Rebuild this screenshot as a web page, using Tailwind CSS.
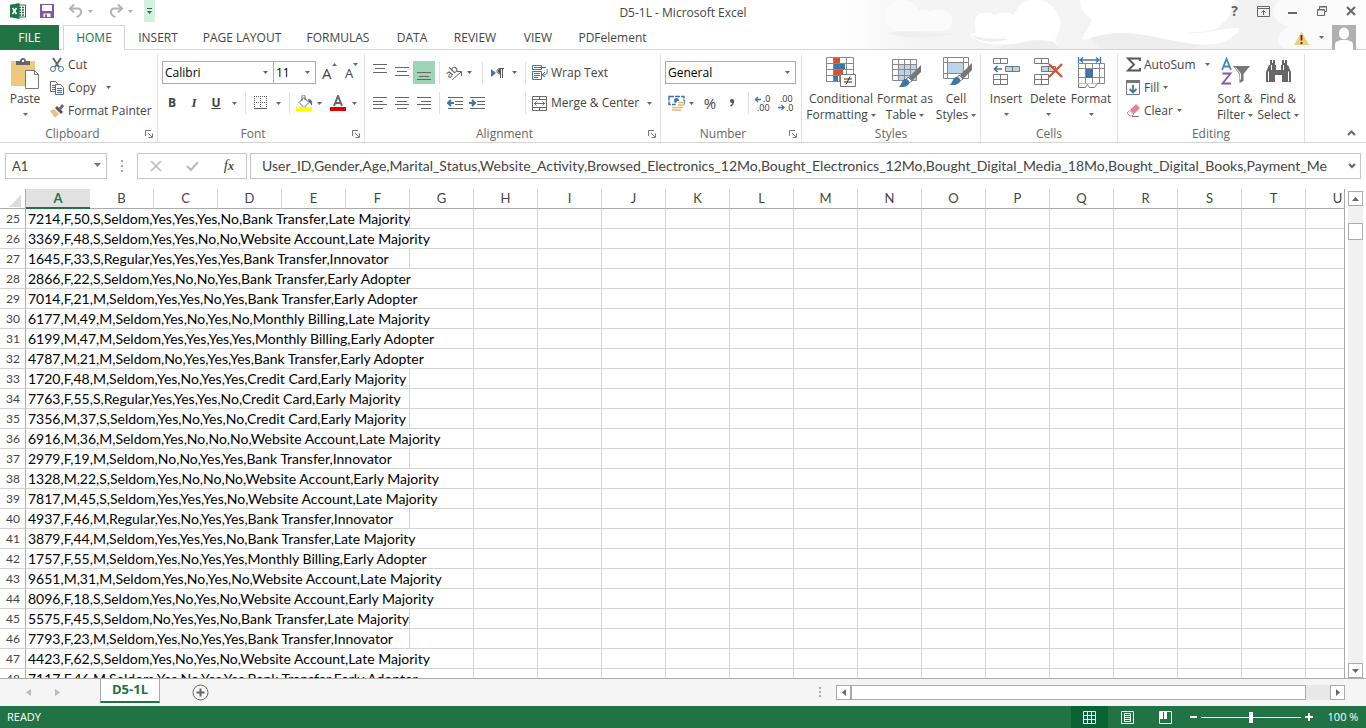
<!DOCTYPE html>
<html lang="en">
<head>
  <meta charset="UTF-8" />
  <meta name="viewport" content="width=device-width, initial-scale=1.0"/>
  <title>D5-1L - Microsoft Excel</title>
  <script src="https://cdn.jsdelivr.net/npm/@tailwindcss/browser@4"></script>
</head>
<body class="h-screen flex flex-col overflow-hidden bg-white text-[#444] text-xs font-['Open_Sans','Noto_Sans',sans-serif]">

  <!-- Shared glyphs -->
  <svg class="hidden" aria-hidden="true">
    <symbol id="caret" viewBox="0 0 5 3"><path d="M0 0h5L2.500 3z" fill="#666"/></symbol>
    <symbol id="launcher" viewBox="0 0 8 8"><path d="M.5 6V.5H6M3 3l4 4M7.500 3.500v4h-4" fill="none" stroke="#777"/></symbol>
  </svg>

  <header class="relative shrink-0 h-[50px] border-b border-[#d4d4d4]">
    <!-- Cloud background -->
    <svg class="absolute right-0 top-0 w-[526px] h-[49px]" viewBox="0 0 526 49" aria-hidden="true">
      <defs>
        <linearGradient id="sky"><stop offset="0" stop-color="#fff"/><stop offset=".14" stop-color="#f4f4f4"/><stop offset=".85" stop-color="#f2f2f2"/><stop offset="1" stop-color="#f8f8f8"/></linearGradient>
      </defs>
      <path d="M0 0h526v49H0z" fill="url(#sky)"/>
      <path d="M46 21C43 8 53-3 65 0c8 1 12 6 14 11 5-3 9-1 11 1 7-5 14-2 20 2 5 5 2 16-7 17H60c-8 0-12-4-14-10z" fill="#fbfbfb"/>
      <path d="M48 33c20-5 45 2 66 0-10 6-55 6-66 0z" fill="#efefef"/>
      <path d="M135 25c-2-12 10-15 20-10 6-4 14-3 19 0C178 2 190-3 204 1c18 8 20 28 11 38l3 8c-14-11-28-6-40-4-12 3-34 2-43-4-5-3-7-5-2-5 4-1 2-4 2-9z" fill="#fff"/>
      <path d="M132 35c12 5 24 3 36 4-12 5-30 3-36-4zM162 45c18 0 34-8 52-3l6 7h-60z" fill="#eee"/>
      <path d="M240 0h155c-4 11-6 19-12 23-10 12-26 7-35 10 20 2 42-8 52-4-12 16-24 15-48 16-30 0-60-16-110-5 2-7 7-14 10-20-8-7-13-12-12-20z" fill="#fff"/>
      <path d="M250 38c40-14 76 5 116 7l-18 4h-86z" fill="#eee"/>
      <path d="M440 0h86v49h-80c-14-5-8-19 4-22-18-5-22-18-10-27z" fill="#fff" opacity=".6"/>
    </svg>

    <div class="relative h-[25px] flex items-start justify-between">
      <div class="flex items-center h-[22px] pl-2.5">
        <svg class="w-4 h-4" viewBox="0 0 16 16" aria-label="Excel"><path d="M8 2h7.500v12H8z" fill="#fff" stroke="#217346"/><path d="M9 4.500h2M12 4.500h2M9 7h2M12 7h2M9 9.500h2M12 9.500h2M9 12h2M12 12h2" stroke="#217346" stroke-width="1.300"/><path d="M0 1.700 9.500 0v16L0 14.300z" fill="#217346"/><path d="M2.500 5l4 6M6.500 5l-4 6" stroke="#fff" stroke-width="1.600"/></svg>
        <button class="ml-3.5 w-3.5 h-3.5" aria-label="Save"><svg viewBox="0 0 14 14"><path d="M0 0h14v14H0z" fill="#7f57a5"/><path d="M2 1h10v6H2zM3.500 9.500h7V13h-7z" fill="#fff"/><path d="M5 10.500h2V13H5z" fill="#7f57a5"/></svg></button>
        <button class="ml-3.5 w-4 h-4" aria-label="Undo"><svg viewBox="0 0 16 16"><path d="M2 5.500h7.500c5 0 5 6.500-1 8.500M6 1.500l-4 4 4 4" fill="none" stroke="#b3b3b3" stroke-width="2"/></svg></button>
        <button class="w-3 h-4 flex items-center justify-center opacity-50" aria-label="Undo list"><svg class="w-[5px] h-[3px]"><use href="#caret"/></svg></button>
        <button class="ml-3 w-4 h-4" aria-label="Redo"><svg viewBox="0 0 16 16"><path d="M14 5.500H6.500c-5 0-5 6.500 1 8.500M10 1.500l4 4-4 4" fill="none" stroke="#b3b3b3" stroke-width="2"/></svg></button>
        <button class="w-3 h-4 flex items-center justify-center opacity-50" aria-label="Redo list"><svg class="w-[5px] h-[3px]"><use href="#caret"/></svg></button>
        <button class="ml-2 w-[11px] h-[22px] bg-[#d3f0e0] flex items-center justify-center" aria-label="Customize"><svg class="w-[5px] h-1.5" viewBox="0 0 5 6"><path d="M0 .5h5" stroke="#217346"/><path d="M0 3h5L2.500 6z" fill="#217346"/></svg></button>
      </div>
      <div class="flex h-[22px] items-center">
        <button class="w-[29px] font-bold text-sm text-[#666]" aria-label="Help">?</button>
        <button class="w-[29px] flex justify-center" aria-label="Ribbon display options"><svg class="w-[13px] h-[11px]" viewBox="0 0 13 11" fill="none" stroke="#666"><path d="M.5.5h12v10H.5zM.5 2.500h12M6.500 9V4.500M4.500 6.500l2-2 2 2"/></svg></button>
        <button class="w-[29px] flex justify-center" aria-label="Minimize"><svg class="w-[9px] h-[11px]" viewBox="0 0 9 11"><path d="M0 6h9v2H0z" fill="#666"/></svg></button>
        <button class="w-[29px] flex justify-center" aria-label="Restore"><svg class="w-[10px] h-[10px]" viewBox="0 0 10 10" fill="none" stroke="#666"><path d="M2.500 3V.5h7v5H8M2 1h8M.5 3.500h7v6h-7zM0 4h8"/></svg></button>
        <button class="w-[30px] flex justify-center" aria-label="Close"><svg class="w-[10px] h-[10px]" viewBox="0 0 10 10"><path d="M1 1l8 8M9 1L1 9" stroke="#666" stroke-width="2"/></svg></button>
      </div>
    </div>
    <h1 class="absolute inset-x-0 top-1 text-center leading-[18px] pointer-events-none">D5-1L - Microsoft Excel</h1>

    <nav class="relative h-[25px] flex">
      <button class="w-[59px] h-[25px] bg-[#217346] text-white">FILE</button>
      <button class="ml-1 w-[62px] h-[25px] bg-white border border-b-0 border-[#d4d4d4] text-[#217346]">HOME</button>
      <button class="w-[66px]">INSERT</button>
      <button class="w-[102px]">PAGE LAYOUT</button>
      <button class="w-[90px]">FORMULAS</button>
      <button class="w-[58px]">DATA</button>
      <button class="w-[68px]">REVIEW</button>
      <button class="w-[58px]">VIEW</button>
      <button class="w-[91px]">PDFelement</button>
      <div class="ml-auto mr-2.5 flex items-center">
        <svg class="w-[15px] h-3.5" viewBox="0 0 15 14" aria-label="Account warning"><path d="M7.500.5 15 14H0z" fill="#f0cc80"/><path d="M7.500 4v5.500M7.500 11v2" stroke="#5b2b1a" stroke-width="1.800"/></svg>
        <svg class="ml-2.5 w-[5px] h-[3px]"><use href="#caret"/></svg>
        <svg class="ml-2 w-6 h-[25px]" viewBox="0 0 24 25" aria-label="Account"><path d="M0 0h24v25H0z" fill="#b0b0b0"/><ellipse cx="12" cy="8.500" rx="5" ry="6" fill="#fff"/><path d="M3 25v-5c0-3 2-4 6-5h6c4 1 6 2 6 5v5z" fill="#fff"/></svg>
      </div>
    </nav>
  </header>

  <!-- Ribbon -->
  <section class="shrink-0 h-[93px] flex border-b border-[#d4d4d4] text-[#444] leading-4 whitespace-nowrap">

    <div class="w-[158px] mt-1 border-r border-[#e1e1e1] flex flex-col justify-between">
      <div class="flex pl-2">
        <button class="w-[34px] pt-1 flex flex-col items-center">
          <svg class="w-7 h-[31px]" viewBox="0 0 28 31"><path d="M0 3h24v25H0z" fill="#edc87e"/><path d="M5 3h4c0-4 6-4 6 0h4v4H5z" fill="#666"/><path d="M11 2h2v2h-2z" fill="#fff"/><path d="M14.500 12.500h9l4 4v14h-13z" fill="#fff" stroke="#777"/><path d="M23.500 12.500v4h4" fill="none" stroke="#777"/></svg>
          <span class="mt-0.5">Paste</span>
          <svg class="mt-1.5 w-[5px] h-[3px]"><use href="#caret"/></svg>
        </button>
        <div class="ml-2 -mt-px flex flex-col">
          <button class="h-[23px] flex items-center gap-1"><svg class="w-3.5 h-4" viewBox="0 0 14 16" fill="none"><path d="M3 1l6 9M11 1L5 10" stroke="#666" stroke-width="2"/><circle cx="3" cy="12" r="2.500" stroke="#3f76a8"/><circle cx="11" cy="12" r="2.500" stroke="#3f76a8"/></svg>Cut</button>
          <button class="h-[23px] flex items-center gap-1"><svg class="w-3.5 h-3.5" viewBox="0 0 14 14" fill="#fff" stroke="#666"><path d="M.5.5h5l2 2v8h-7z"/><path d="M2 4.500h3M2 6.500h3M2 8.500h3" stroke="#3f76a8"/><path d="M5.500 3.500h5l3 3v7h-8z"/><path d="M7 7.500h5M7 9.500h5M7 11.500h5" stroke="#3f76a8"/></svg>Copy<svg class="ml-1.5 w-[5px] h-[3px]"><use href="#caret"/></svg></button>
          <button class="h-[23px] flex items-center gap-1"><svg class="w-3.5 h-3.5" viewBox="0 0 14 14"><path d="M0 7l4-2 5 5-4 4z" fill="#edc087"/><path d="M5 4l2-2 6 6-2 2z" fill="#555"/><path d="M9 4l3-4 2 2-3 4z" fill="#666"/></svg>Format Painter</button>
        </div>
      </div>
      <div class="flex items-center pl-1 pr-1"><span class="flex-1 text-center text-[#666] pr-1">Clipboard</span><button aria-label="Clipboard options"><svg class="w-2 h-2"><use href="#launcher"/></svg></button></div>
    </div>

    <div class="w-[207px] mt-1 border-r border-[#e1e1e1] flex flex-col justify-between">
      <div class="pl-1 pt-[7px]">
        <div class="flex items-center">
          <div class="relative"><select aria-label="Font" class="appearance-none block w-[112px] h-[23px] border border-[#ababab] bg-white pl-0.5 text-black"><option>Calibri</option></select><svg class="absolute right-1.5 top-2.5 w-[5px] h-[3px] pointer-events-none"><use href="#caret"/></svg></div>
          <div class="relative -ml-px"><select aria-label="Font size" class="appearance-none block w-[43px] h-[23px] border border-[#ababab] bg-white pl-0.5 text-black"><option>11</option></select><svg class="absolute right-1.5 top-2.5 w-[5px] h-[3px] pointer-events-none"><use href="#caret"/></svg></div>
          <button class="ml-1.5 w-[15px] h-5 flex text-[15px] leading-5" aria-label="Grow font">A<svg class="w-[5px] h-[3px] shrink-0" viewBox="0 0 5 3"><path d="M0 3h5L2.500 0z" fill="#3f76a8"/></svg></button>
          <button class="ml-2 w-[15px] h-5 flex text-[13px] leading-5" aria-label="Shrink font">A<svg class="w-[5px] h-[3px] shrink-0" viewBox="0 0 5 3"><path d="M0 0h5L2.500 3z" fill="#3f76a8"/></svg></button>
        </div>
        <div class="mt-2 h-[22px] flex items-center">
          <button class="w-5 font-bold">B</button>
          <button class="ml-0.5 w-5 font-bold italic text-[13px] font-['Liberation_Serif',serif]">I</button>
          <button class="ml-0.5 w-5 font-bold underline">U</button>
          <svg class="ml-1.5 w-[5px] h-[3px]"><use href="#caret"/></svg>
          <span class="ml-2 h-[22px] border-l border-[#e1e1e1]"></span>
          <button class="ml-2 w-3.5 h-3.5" aria-label="Borders"><svg viewBox="0 0 14 14" fill="none" stroke="#555"><path d="M.5 0v13M6.500 0v13M12.500 0v13M0 .5h13M0 6.500h13" stroke-dasharray="1 1"/><path d="M0 12.500h13"/></svg></button>
          <svg class="ml-2 w-[5px] h-[3px]"><use href="#caret"/></svg>
          <span class="ml-2 h-[22px] border-l border-[#e1e1e1]"></span>
          <button class="ml-1.5 w-[17px] h-4" aria-label="Fill color"><svg viewBox="0 0 17 16"><path d="M3 7.500l5-5 5 5-5 5z" fill="#fff" stroke="#666"/><path d="M6 6V1.500c0-2 3-2 3 0V5" fill="none" stroke="#666"/><path d="M12 4c4 0 5 3 3.500 7-1-3-2-4-3-4z" fill="#3f76a8"/><path d="M0 12h16v4H0z" fill="#ff0"/></svg></button>
          <svg class="ml-1 w-[5px] h-[3px]"><use href="#caret"/></svg>
          <button class="ml-2 w-4 h-4" aria-label="Font color"><svg viewBox="0 0 16 16"><path d="M4 11L8 1l4 10M5.500 8h5" fill="none" stroke="#666" stroke-width="2"/><path d="M0 12h16v4H0z" fill="#e00000"/></svg></button>
          <svg class="ml-1.5 w-[5px] h-[3px]"><use href="#caret"/></svg>
        </div>
      </div>
      <div class="flex items-center pr-1"><span class="flex-1 text-center text-[#666] pr-1">Font</span><button aria-label="Font options"><svg class="w-2 h-2"><use href="#launcher"/></svg></button></div>
    </div>

    <div class="w-[296px] mt-1 border-r border-[#e1e1e1] flex flex-col justify-between">
      <div class="pl-1 pt-[7px]">
        <div class="h-[23px] flex items-center">
          <button class="w-[22px] h-[23px] flex justify-center" aria-label="Top align"><svg class="w-3.5 h-[23px]" viewBox="0 0 14 23" stroke="#666"><path d="M0 3.500h14M2 7.500h10M0 11.500h14"/></svg></button>
          <button class="w-[22px] h-[23px] flex justify-center" aria-label="Middle align"><svg class="w-3.5 h-[23px]" viewBox="0 0 14 23" stroke="#666"><path d="M0 6.500h14M2 10.500h10M0 14.500h14"/></svg></button>
          <button class="w-[22px] h-[23px] flex justify-center bg-[#9fd5b7]" aria-label="Bottom align"><svg class="w-3.5 h-[23px]" viewBox="0 0 14 23" stroke="#666"><path d="M0 11.500h14M2 15.500h10M0 18.500h14"/></svg></button>
          <span class="ml-1 h-[22px] border-l border-[#e1e1e1]"></span>
          <button class="ml-1.5 w-[17px] h-4" aria-label="Orientation"><svg class="w-[17px] h-4 overflow-visible" viewBox="0 0 17 16"><text x="0" y="11" font-size="11" fill="#444" transform="rotate(-45 5 8)">ab</text><path d="M6 15l9-8M11 6.500h4.500V11" fill="none" stroke="#666"/></svg></button>
          <svg class="ml-1 w-[5px] h-[3px]"><use href="#caret"/></svg>
          <span class="ml-2.5 h-[22px] border-l border-[#e1e1e1]"></span>
          <button class="ml-2 w-[13px] h-3" aria-label="Text direction"><svg viewBox="0 0 13 12"><path d="M0 2l5 4-5 4z" fill="#3f76a8"/><path d="M9 7C5 7 5 1.500 9 1.500h4M9.500 1.500V11M11.500 1.500V11" fill="none" stroke="#555"/><path d="M9 2v4.500C6.500 6.500 6 2 9 2z" fill="#555"/></svg></button>
          <svg class="ml-2 w-[5px] h-[3px]"><use href="#caret"/></svg>
          <span class="ml-2 h-[22px] border-l border-[#e1e1e1]"></span>
          <button class="ml-1.5 flex items-center gap-[3px]"><svg class="w-4 h-[15px]" viewBox="0 0 16 15" fill="none" stroke="#3f76a8"><path d="M.5.5h9v4h-9zM.5 6.500h9v8h-9z"/><path d="M2 2.500h12M2 8.500h6M2 10.500h6M2 12.500h4" stroke="#666"/><path d="M15 4c1 5-1 6-4 6M13 7l-3 3 3 2"/></svg>Wrap Text</button>
        </div>
        <div class="mt-2 h-[22px] flex items-center">
          <button class="w-[22px] flex justify-center" aria-label="Align left"><svg class="w-3.5 h-3" viewBox="0 0 14 12" stroke="#666"><path d="M0 .5h14M0 4.500h10M0 7.500h14M0 11.500h10"/></svg></button>
          <button class="w-[22px] flex justify-center" aria-label="Center"><svg class="w-3.5 h-3" viewBox="0 0 14 12" stroke="#666"><path d="M0 .5h14M2 4.500h10M0 7.500h14M2 11.500h10"/></svg></button>
          <button class="w-[22px] flex justify-center" aria-label="Align right"><svg class="w-3.5 h-3" viewBox="0 0 14 12" stroke="#666"><path d="M0 .5h14M4 4.500h10M0 7.500h14M4 11.500h10"/></svg></button>
          <span class="ml-1 h-[22px] border-l border-[#e1e1e1]"></span>
          <button class="ml-1 w-[22px] flex justify-center" aria-label="Decrease indent"><svg class="w-4 h-3" viewBox="0 0 16 12" fill="none" stroke="#666"><path d="M1 .5h15M8 4.500h8M8 7.500h8M1 11.500h15"/><path d="M1 6h6M4 3L1 6l3 3" stroke="#3f76a8" stroke-width="2"/></svg></button>
          <button class="w-[22px] flex justify-center" aria-label="Increase indent"><svg class="w-4 h-3" viewBox="0 0 16 12" fill="none" stroke="#666"><path d="M1 .5h15M8 4.500h8M8 7.500h8M1 11.500h15"/><path d="M0 6h6M3 3l3 3-3 3" stroke="#3f76a8" stroke-width="2"/></svg></button>
          <span class="ml-[37px] h-[22px] border-l border-[#e1e1e1]"></span>
          <button class="ml-1.5 flex items-center gap-[3px]"><svg class="w-4 h-[15px]" viewBox="0 0 16 15" fill="none" stroke="#666"><path d="M.5.5h14v14H.5zM.5 3.500h14M.5 11.500h14M7.500.5v3M7.500 11.500v3"/><path d="M2 7.500h11M4.500 5.500l-2 2 2 2M10.500 5.500l2 2-2 2" stroke="#3f76a8"/></svg>Merge &amp; Center</button>
          <svg class="ml-2 w-[5px] h-[3px]"><use href="#caret"/></svg>
        </div>
      </div>
      <div class="flex items-center pr-1"><span class="flex-1 text-center text-[#666] pr-1">Alignment</span><button aria-label="Alignment options"><svg class="w-2 h-2"><use href="#launcher"/></svg></button></div>
    </div>

    <div class="w-[141px] mt-1 border-r border-[#e1e1e1] flex flex-col justify-between">
      <div class="pl-1 pt-[7px]">
        <div class="relative w-[131px]"><select aria-label="Number format" class="appearance-none block w-full h-[23px] border border-[#ababab] bg-white pl-0.5 text-black"><option>General</option></select><svg class="absolute right-1.5 top-2.5 w-[5px] h-[3px] pointer-events-none"><use href="#caret"/></svg></div>
        <div class="mt-2 h-[22px] flex items-center">
          <button class="ml-[3px] w-[17px] h-4" aria-label="Accounting format"><svg viewBox="0 0 17 16"><path d="M1 1.500h15v8H1z" fill="#fff" stroke="#3f76a8" stroke-width="1.500" stroke-dasharray="5 1"/><circle cx="8.500" cy="5.500" r="2.500" fill="#3f76a8"/><path d="M9 6h7v9H7v-3z" fill="#fff"/><path d="M10 7.500h6M10 10h6M4 12.500h11M4 15h9" stroke="#e3b96a" stroke-width="1.600"/></svg></button>
          <svg class="ml-1 w-[5px] h-[3px]"><use href="#caret"/></svg>
          <button class="ml-2 w-4 text-[15px]" aria-label="Percent">%</button>
          <button class="ml-2 w-3 h-4" aria-label="Comma style"><svg class="w-3 h-4" viewBox="0 0 12 16"><circle cx="6" cy="6" r="2" fill="#555"/><path d="M7.500 6c0 3-1 4-3 5" fill="none" stroke="#555" stroke-width="1.400"/></svg></button>
          <span class="ml-2.5 h-[22px] border-l border-[#e1e1e1]"></span>
          <button class="ml-1.5 w-[17px] h-4" aria-label="Increase decimal"><svg class="w-[17px] h-4 overflow-visible" viewBox="0 0 17 16"><path d="M0 4.500h6M3 2L.5 4.500 3 7" fill="none" stroke="#3f76a8" stroke-width="1.300"/><text x="8" y="7" font-size="9" fill="#333">.0</text><text x="2" y="16" font-size="9" fill="#333">.00</text></svg></button>
          <button class="ml-1.5 w-[17px] h-4" aria-label="Decrease decimal"><svg class="w-[17px] h-4 overflow-visible" viewBox="0 0 17 16"><text x="2" y="7" font-size="9" fill="#333">.00</text><text x="8" y="16" font-size="9" fill="#333">.0</text><path d="M0 12.500h6M3.500 10L6 12.500 3.500 15" fill="none" stroke="#3f76a8" stroke-width="1.300"/></svg></button>
        </div>
      </div>
      <div class="flex items-center pr-1"><span class="flex-1 text-center text-[#666] pr-1">Number</span><button aria-label="Number options"><svg class="w-2 h-2"><use href="#launcher"/></svg></button></div>
    </div>

    <div class="w-[179px] mt-1 border-r border-[#e1e1e1] flex flex-col justify-between">
      <div class="pl-1 pt-[3px] flex">
        <button class="w-[70px] flex flex-col items-center"><svg class="w-[31px] h-[31px]" viewBox="0 0 31 31"><path d="M.5.5h27v24H.5zM.5 6.500h27M.5 12.500h27M.5 18.500h27M7.500.5v24M13.500.5v24M20.500.5v24" fill="#fff" stroke="#888"/><path d="M8 1h6v5H8zM8 13h9v5H8z" fill="#d35230"/><path d="M8 7h11v5H8zM8 19h4v5H8z" fill="#3f76a8"/><path d="M14.500 17.500h15v12h-15z" fill="#fff" stroke="#777"/><path d="M18 22h8M18 25h8M24 19.500l-4 8" stroke="#333"/></svg><span class="mt-[3px]">Conditional</span><span class="flex items-center gap-[3px]">Formatting<svg class="w-[5px] h-[3px]"><use href="#caret"/></svg></span></button>
        <button class="w-[58px] flex flex-col items-center"><svg class="w-[31px] h-[31px]" viewBox="0 0 31 31"><path d="M2.500 2.500h24v21h-24z" fill="#fff"/><path d="M8 8h18v15H8z" fill="#bcd3e8"/><path d="M2.500 2.500h24v21h-24zM2.500 7.500h24M2.500 12.500h24M2.500 18.500h24M8.500 2.500v21M14.500 2.500v21M20.500 2.500v21" fill="none" stroke="#888"/><path d="M31 8v7l-9 9-3-4z" fill="#777"/><path d="M18 20l4 4-3 2-3-3z" fill="#fff" stroke="#777"/><path d="M15 22c3 0 5 2 4 5-3 4-8 3-11 3 4-1 3-7 7-8z" fill="#3f76a8"/></svg><span class="mt-[3px]">Format as</span><span class="flex items-center gap-[3px]">Table<svg class="w-[5px] h-[3px]"><use href="#caret"/></svg></span></button>
        <button class="w-11 flex flex-col items-center"><svg class="w-[31px] h-[31px]" viewBox="0 0 31 31"><path d="M2.500.5h25v21h-25z" fill="#fff"/><path d="M7 6h16v10H7z" fill="#bcd3e8"/><path d="M2.500.5h25v21h-25zM2.500 5.500h25M2.500 16.500h25M6.500.5v21M22.500.5v21" fill="none" stroke="#888"/><path d="M31 6v7l-9 9-3-4z" fill="#777"/><path d="M18 18l4 4-3 2-3-3z" fill="#fff" stroke="#777"/><path d="M15 20c3 0 5 2 4 5-3 4-8 3-11 3 4-1 3-7 7-8z" fill="#3f76a8"/></svg><span class="mt-[3px]">Cell</span><span class="flex items-center gap-[3px]">Styles<svg class="w-[5px] h-[3px]"><use href="#caret"/></svg></span></button>
      </div>
      <span class="text-center text-[#666]">Styles</span>
    </div>

    <div class="w-[137px] mt-1 border-r border-[#e1e1e1] flex flex-col justify-between">
      <div class="pl-1 pt-[3px] flex">
        <button class="w-[42px] flex flex-col items-center"><svg class="w-[27px] h-[31px]" viewBox="0 0 27 31"><path d="M.5 1.500h14v5H.5zM7.500 1.500v5M.5 17.500h14v10H.5zM.5 22.500h14M7.500 17.500v10" fill="#fff" stroke="#777"/><path d="M12.500 9.500h14v5h-14zM19.500 9.500v5" fill="#bcd3e8" stroke="#777"/><path d="M1.500 12H9M4.500 9l-3 3 3 3" fill="none" stroke="#3f76a8" stroke-width="1.700"/></svg><span class="mt-[3px]">Insert</span><svg class="mt-1.5 w-[5px] h-[3px]"><use href="#caret"/></svg></button>
        <button class="w-[42px] flex flex-col items-center"><svg class="w-[29px] h-[31px]" viewBox="0 0 29 31"><path d="M.5 1.500h14v5H.5zM7.500 1.500v5M.5 17.500h14v10H.5zM.5 22.500h14M7.500 17.500v10" fill="#fff" stroke="#777"/><path d="M7.500 9.500h14v5h-14zM14.500 9.500v5" fill="#bcd3e8" stroke="#777"/><path d="M15 7l13 13M28 7L15 20" stroke="#d35230" stroke-width="2.200"/></svg><span class="mt-[3px]">Delete</span><svg class="mt-1.5 w-[5px] h-[3px]"><use href="#caret"/></svg></button>
        <button class="w-[44px] flex flex-col items-center"><svg class="w-[29px] h-[31px]" viewBox="0 0 29 31"><path d="M1.500 0v6M23.500 0v6M3 3h19M6 .5L3 3l3 2.500M19 .5L22 3l-3 2.500" fill="none" stroke="#3f76a8" stroke-width="1.300"/><path d="M1.500 6.500h26v20h-26zM1.500 11.500h26M1.500 20.500h26M8.500 6.500v20M15.500 6.500v20M22.500 6.500v20" fill="#fff" stroke="#888"/><path d="M9 12h7v9H9z" fill="#3f76a8"/><path d="M1.500 26.500v4h7l2-3 2 3h5l3-4" fill="#fff" stroke="#777"/></svg><span class="mt-[3px]">Format</span><svg class="mt-1.5 w-[5px] h-[3px]"><use href="#caret"/></svg></button>
      </div>
      <span class="text-center text-[#666]">Cells</span>
    </div>

    <div class="w-[187px] mt-1 border-r border-[#e1e1e1] flex flex-col justify-between">
      <div class="pl-2 flex">
        <div class="w-[88px] -mt-px flex flex-col items-start">
          <button class="h-[23px] flex items-center gap-[3px]"><svg class="w-[15px] h-[15px]" viewBox="0 0 15 15"><path d="M14 4V1.500H2L8 7.500l-6 6h12V11" fill="none" stroke="#555" stroke-width="1.800"/></svg>AutoSum<svg class="ml-1.5 w-[5px] h-[3px]"><use href="#caret"/></svg></button>
          <button class="h-[23px] flex items-center gap-1"><svg class="w-3.5 h-[15px]" viewBox="0 0 14 15"><path d="M.5.5h13v14H.5z" fill="#fff" stroke="#777"/><path d="M0 0h14v3H0z" fill="#777"/><path d="M7 5v7M3.500 9L7 12.500 10.500 9" fill="none" stroke="#3f76a8" stroke-width="1.800"/></svg>Fill<svg class="w-[5px] h-[3px]"><use href="#caret"/></svg></button>
          <button class="h-[23px] flex items-center gap-1"><svg class="w-3.5 h-[13px]" viewBox="0 0 14 13"><path d="M4 6l6-6 4 4-6 6z" fill="#ea7f9b"/><path d="M3.500 6.500L1 9l3 3h2l2-2z" fill="#fff" stroke="#ea7f9b"/><path d="M6 12.500h7" stroke="#777"/></svg>Clear<svg class="w-[5px] h-[3px]"><use href="#caret"/></svg></button>
        </div>
        <button class="w-[42px] pt-[3px] flex flex-col items-center"><svg class="w-[29px] h-[31px]" viewBox="0 0 29 31" fill="none"><path d="M1 13L5.500 2 10 13M2.500 9.500h6" stroke="#3f86c8" stroke-width="1.800"/><path d="M1.500 16.500h8l-8 10H10" stroke="#8a55a8" stroke-width="1.800"/><path d="M12 9h17l-6.500 8v7l-4 2v-9z" fill="#777"/><path d="M14.500 10.500l5 6v6" stroke="#fff"/></svg><span class="mt-[3px]">Sort &amp;</span><span class="flex items-center gap-[3px]">Filter<svg class="w-[5px] h-[3px]"><use href="#caret"/></svg></span></button>
        <button class="w-[44px] pt-[3px] flex flex-col items-center"><svg class="w-[27px] h-[31px]" viewBox="0 0 27 31"><path d="M5 3h5v5h1v5h5V8h1V3h5v5h1l3 7v10h-9v-7h-7v7H1V15l3-7h1z" fill="#666"/><path d="M3.500 14.500v10M6.500 8v5M18.500 8v5M23.500 14.500v10M7.500 3v3M19.500 3v3" stroke="#fff"/></svg><span class="mt-[3px]">Find &amp;</span><span class="flex items-center gap-[3px]">Select<svg class="w-[5px] h-[3px]"><use href="#caret"/></svg></span></button>
      </div>
      <span class="text-center text-[#666]">Editing</span>
    </div>

    <button class="ml-auto mr-2.5 mb-1 self-end" aria-label="Collapse the ribbon"><svg class="w-[9px] h-[9px]" viewBox="0 0 9 9"><path d="M1 6l3.500-3.500L8 6" fill="none" stroke="#666" stroke-width="2"/></svg></button>
  </section>

  <!-- Formula bar -->
  <section class="shrink-0 flex items-stretch h-[46px] py-2.5 px-[5px] text-[13px] font-[Lato,sans-serif]">
    <div class="relative w-[102px]"><input aria-label="Name box" class="w-full h-[26px] border border-[#c6c6c6] pl-1.5" value="A1"><svg class="absolute right-1.5 top-2.5 w-[7px] h-1" viewBox="0 0 7 4"><path d="M0 0h7L3.500 4z" fill="#777"/></svg></div>
    <svg class="mx-3.5 w-0.5 h-[26px]" viewBox="0 0 2 26"><path d="M0 7h2v2H0zM0 12h2v2H0zM0 17h2v2H0z" fill="#aaa"/></svg>
    <div class="w-[110px] border border-[#c6c6c6] flex items-center justify-between px-3">
      <button aria-label="Cancel"><svg class="w-3 h-3" viewBox="0 0 12 12"><path d="M1 1l10 10M11 1L1 11" stroke="#bbb" stroke-width="1.600"/></svg></button>
      <button aria-label="Enter"><svg class="w-[13px] h-3" viewBox="0 0 13 12"><path d="M1 6l4 4 7-8" fill="none" stroke="#bbb" stroke-width="2.200"/></svg></button>
      <button class="italic text-[15px] font-['Liberation_Serif',serif]" aria-label="Insert function">f<span class="text-xs font-bold">x</span></button>
    </div>
    <div class="ml-[3px] flex-1 border border-[#c6c6c6] flex items-center pl-[11px] pr-1">
      <input aria-label="Formula bar" class="flex-1 min-w-0 text-sm" value="User_ID,Gender,Age,Marital_Status,Website_Activity,Browsed_Electronics_12Mo,Bought_Electronics_12Mo,Bought_Digital_Media_18Mo,Bought_Digital_Books,Payment_Me">
      <button aria-label="Expand formula bar"><svg class="w-2 h-1.5" viewBox="0 0 8 6"><path d="M1 1l3 3 3-3" fill="none" stroke="#666" stroke-width="2"/></svg></button>
    </div>
  </section>

  <!-- Sheet -->
  <main class="flex-1 min-h-0 flex border-b border-[#ababab]">
    <div class="flex-1 min-w-0 overflow-hidden border-r border-[#ababab]">
      <table class="table-fixed border-separate border-spacing-0 w-[1370px] text-sm leading-[19px] font-[Lato,sans-serif]">
        <thead><tr id="columns" class="text-[13px]"></tr></thead>
        <tbody id="rows" class="text-black"></tbody>
      </table>
    </div>
    <div class="w-[21px] px-[3px] pt-0.5 flex flex-col">
      <button class="h-[15px] border border-[#ababab] flex items-center justify-center" aria-label="Scroll up"><svg class="w-[7px] h-1" viewBox="0 0 7 4"><path d="M0 4h7L3.500 0z" fill="#666"/></svg></button>
      <div class="flex-1 bg-[#f1f1f1] pt-[17px]"><div class="h-[17px] border border-[#ababab] bg-white"></div></div>
      <button class="h-[15px] border border-[#ababab] flex items-center justify-center" aria-label="Scroll down"><svg class="w-[7px] h-1" viewBox="0 0 7 4"><path d="M0 0h7L3.500 4z" fill="#666"/></svg></button>
    </div>
  </main>

  <!-- Sheet tabs -->
  <section class="shrink-0 h-[27px] bg-[#f5f5f5] flex items-start">
    <button class="ml-[26px] mt-2.5 w-[5px]" aria-label="Previous sheet"><svg class="w-[5px] h-[7px]" viewBox="0 0 5 7"><path d="M5 0v7L0 3.500z" fill="#bbb"/></svg></button>
    <button class="ml-6 mt-2.5 w-[5px]" aria-label="Next sheet"><svg class="w-[5px] h-[7px]" viewBox="0 0 5 7"><path d="M0 0v7l5-3.500z" fill="#bbb"/></svg></button>
    <button class="ml-10 w-[60px] h-6 bg-white border-x border-[#ababab] border-b-2 border-b-[#217346] text-[#217346] text-[13px] font-bold">D5-1L</button>
    <button class="ml-8 mt-[5px]" aria-label="New sheet"><svg class="w-[17px] h-[17px]" viewBox="0 0 17 17" fill="none" stroke="#666"><circle cx="8.500" cy="8.500" r="7.500"/><path d="M8.500 4.500v8M4.500 8.500h8" stroke-width="2"/></svg></button>
    <svg class="ml-auto mt-2 w-0.5 h-2.5" viewBox="0 0 2 10"><path d="M0 0h2v2H0zM0 4h2v2H0zM0 8h2v2H0z" fill="#aaa"/></svg>
    <div class="ml-[15px] mt-1.5 mr-[21px] w-[509px] flex">
      <button class="w-[15px] h-[15px] bg-white border border-[#ababab] flex items-center justify-center" aria-label="Scroll left"><svg class="w-1 h-[7px]" viewBox="0 0 4 7"><path d="M4 0v7L0 3.500z" fill="#666"/></svg></button>
      <div class="flex-1 bg-[#e8e8e8] pr-6"><div class="h-[15px] bg-white border border-[#ababab]"></div></div>
      <button class="w-[15px] h-[15px] bg-white border border-[#ababab] flex items-center justify-center" aria-label="Scroll right"><svg class="w-1 h-[7px]" viewBox="0 0 4 7"><path d="M0 0v7l4-3.500z" fill="#666"/></svg></button>
    </div>
  </section>

  <footer class="shrink-0 h-[22px] bg-[#217346] text-white text-[11px] flex items-center">
    <span class="pl-[7px]">READY</span>
    <button class="ml-auto w-[37px] h-[22px] bg-[#0a6332] flex items-center justify-center" aria-label="Normal view"><svg class="w-[13px] h-[13px]" viewBox="0 0 13 13" fill="none" stroke="#fff"><path d="M.5.5h12v12H.5zM.5 4.500h12M.5 8.500h12M4.500.5v12M8.500.5v12"/></svg></button>
    <button class="w-[39px] flex justify-center" aria-label="Page layout view"><svg class="w-[13px] h-[13px]" viewBox="0 0 13 13" fill="none" stroke="#fff"><path d="M.5.5h12v12H.5zM3.500 2.500h6v8h-6zM4 4.500h5M4 6.500h5M4 8.500h5"/></svg></button>
    <button class="w-[37px] flex justify-center" aria-label="Page break preview"><svg class="w-[13px] h-[13px]" viewBox="0 0 13 13"><path d="M.5.5h12v12H.5z" fill="none" stroke="#fff"/><path d="M1 1h3v7H1zM5 1h3v7H5z" fill="#fff"/></svg></button>
    <button class="ml-1.5 w-[7px] h-0.5 bg-white" aria-label="Zoom out"></button>
    <input type="range" aria-label="Zoom" min="0" max="100" value="50" class="mx-1 w-[100px] h-3 appearance-none bg-transparent [&::-webkit-slider-runnable-track]:h-px [&::-webkit-slider-runnable-track]:bg-white [&::-webkit-slider-thumb]:appearance-none [&::-webkit-slider-thumb]:w-1 [&::-webkit-slider-thumb]:h-[11px] [&::-webkit-slider-thumb]:-mt-[5px] [&::-webkit-slider-thumb]:bg-white">
    <button aria-label="Zoom in"><svg class="w-2 h-2" viewBox="0 0 8 8"><path d="M4 0v8M0 4h8" stroke="#fff" stroke-width="2"/></svg></button>
    <button class="ml-3.5 mr-[7px] w-8">100 %</button>
  </footer>

  <script>
    const FIRST_ROW = 25;
    const LETTERS = "ABCDEFGHIJKLMNOPQRSTU".split("");

    const records = [
      "7214,F,50,S,Seldom,Yes,Yes,Yes,No,Bank Transfer,Late Majority",
      "3369,F,48,S,Seldom,Yes,Yes,No,No,Website Account,Late Majority",
      "1645,F,33,S,Regular,Yes,Yes,Yes,Yes,Bank Transfer,Innovator",
      "2866,F,22,S,Seldom,Yes,No,No,Yes,Bank Transfer,Early Adopter",
      "7014,F,21,M,Seldom,Yes,Yes,No,Yes,Bank Transfer,Early Adopter",
      "6177,M,49,M,Seldom,Yes,No,Yes,No,Monthly Billing,Late Majority",
      "6199,M,47,M,Seldom,Yes,Yes,Yes,Yes,Monthly Billing,Early Adopter",
      "4787,M,21,M,Seldom,No,Yes,Yes,Yes,Bank Transfer,Early Adopter",
      "1720,F,48,M,Seldom,Yes,No,Yes,Yes,Credit Card,Early Majority",
      "7763,F,55,S,Regular,Yes,Yes,Yes,No,Credit Card,Early Majority",
      "7356,M,37,S,Seldom,Yes,No,Yes,No,Credit Card,Early Majority",
      "6916,M,36,M,Seldom,Yes,No,No,No,Website Account,Late Majority",
      "2979,F,19,M,Seldom,No,No,Yes,Yes,Bank Transfer,Innovator",
      "1328,M,22,S,Seldom,Yes,No,No,No,Website Account,Early Majority",
      "7817,M,45,S,Seldom,Yes,Yes,Yes,No,Website Account,Late Majority",
      "4937,F,46,M,Regular,Yes,No,Yes,Yes,Bank Transfer,Innovator",
      "3879,F,44,M,Seldom,Yes,Yes,Yes,No,Bank Transfer,Late Majority",
      "1757,F,55,M,Seldom,Yes,No,Yes,Yes,Monthly Billing,Early Adopter",
      "9651,M,31,M,Seldom,Yes,No,Yes,No,Website Account,Late Majority",
      "8096,F,18,S,Seldom,Yes,No,Yes,No,Website Account,Early Majority",
      "5575,F,45,S,Seldom,No,Yes,Yes,No,Bank Transfer,Late Majority",
      "7793,F,23,M,Seldom,Yes,No,Yes,Yes,Bank Transfer,Innovator",
      "4423,F,62,S,Seldom,Yes,No,Yes,No,Website Account,Late Majority",
      "7117,F,46,M,Seldom,Yes,No,Yes,Yes,Bank Transfer,Early Adopter"
    ];

    // Rows whose text stays inside columns A-F
    const shortRows = [25, 27, 33, 34, 35, 37, 40, 45, 46];

    document.getElementById("columns").innerHTML = `
      <th class="w-[26px] h-5 p-0 border-r border-b border-[#ababab]"><svg class="ml-auto mr-1 mt-1 w-3 h-3" viewBox="0 0 12 12"><path d="M12 0v12H0z" fill="#dcdcdc"/></svg></th>
    ` + LETTERS.map(letter => letter === "A"
      ? `<th class="w-16 h-5 p-0 leading-[18px] bg-[#e1e1e1] border-b-2 border-[#217346] text-[#217346] font-bold">${letter}</th>`
      : `<th class="w-16 h-5 p-0 font-normal border-r border-b border-r-[#d4d4d4] border-b-[#ababab]">${letter}</th>`
    ).join("");

    document.getElementById("rows").innerHTML = records.map((text, i) => {
      const row = FIRST_ROW + i;
      const span = shortRows.includes(row) ? 6 : 7;
      const blanks = LETTERS.slice(span).map(() => `<td class="p-0 border-r border-b border-[#d4d4d4]"></td>`).join("");
      return `
        <tr class="h-5">
          <th class="p-0 pr-[5px] text-right text-xs leading-[19px] font-normal text-[#444] border-r border-b border-r-[#ababab] border-b-[#d4d4d4]">${row}</th>
          <td colspan="${span}" class="p-0 pl-0.5 whitespace-nowrap border-r border-b border-[#d4d4d4]">${text}</td>${blanks}
        </tr>`;
    }).join("");
  </script>
</body>
</html>
